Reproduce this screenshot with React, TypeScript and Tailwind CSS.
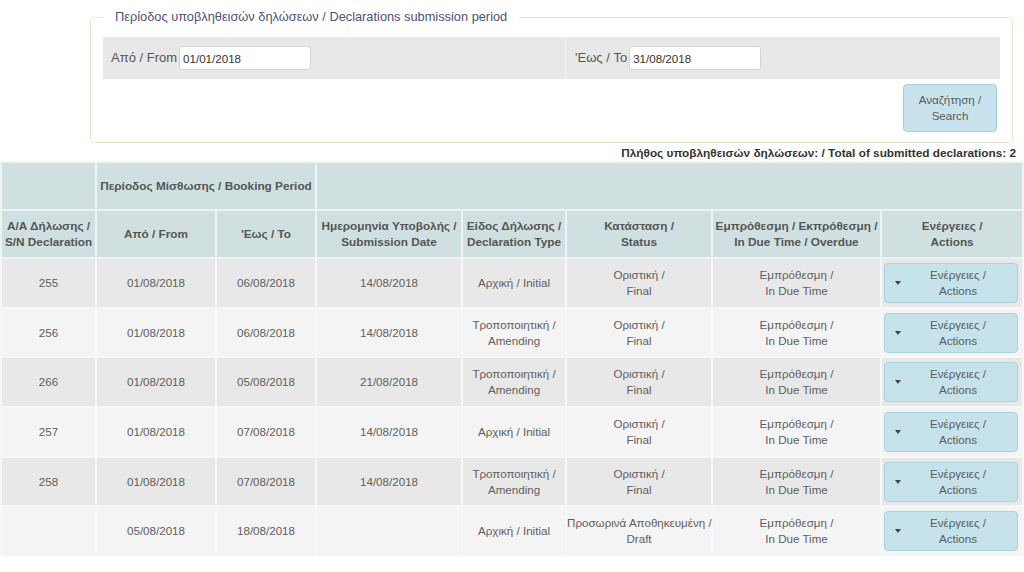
import React from 'react'

type Row = {
  sn: string
  from: string
  to: string
  submitted: string
  type: [string, string?]
  status: [string, string]
}

const ROWS: Row[] = [
  { sn: '255', from: '01/08/2018', to: '06/08/2018', submitted: '14/08/2018', type: ['Αρχική / Initial'], status: ['Οριστική /', 'Final'] },
  { sn: '256', from: '01/08/2018', to: '06/08/2018', submitted: '14/08/2018', type: ['Τροποποιητική /', 'Amending'], status: ['Οριστική /', 'Final'] },
  { sn: '266', from: '01/08/2018', to: '05/08/2018', submitted: '21/08/2018', type: ['Τροποποιητική /', 'Amending'], status: ['Οριστική /', 'Final'] },
  { sn: '257', from: '01/08/2018', to: '07/08/2018', submitted: '14/08/2018', type: ['Αρχική / Initial'], status: ['Οριστική /', 'Final'] },
  { sn: '258', from: '01/08/2018', to: '07/08/2018', submitted: '14/08/2018', type: ['Τροποποιητική /', 'Amending'], status: ['Οριστική /', 'Final'] },
  { sn: '', from: '05/08/2018', to: '18/08/2018', submitted: '', type: ['Αρχική / Initial'], status: ['Προσωρινά Αποθηκευμένη /', 'Draft'] },
]

const th = 'border-2 border-[#eef3f3] px-0 text-center align-middle font-bold text-[11.8px] leading-[16px] text-[#555] whitespace-nowrap'
const td = 'border-2 border-[#f7f7f7] px-0 text-center align-middle text-[11.6px] leading-[16px] text-[#5e5e5e] whitespace-nowrap'

function Lines({ lines }: { lines: (string | undefined)[] }) {
  return (
    <>
      {lines.filter(Boolean).map((l, i) => (
        <div key={i}>{l}</div>
      ))}
    </>
  )
}

function ActionsButton() {
  return (
    <button className="flex h-[40px] w-[134px] items-center rounded-[4px] border border-[#a8d2de] bg-[#c6e3eb] px-[10px] text-[11.6px] leading-[16px] text-[#5a5a5a]">
      <span className="h-0 w-0 border-x-[3.5px] border-t-[4px] border-x-transparent border-t-[#444]" />
      <span className="flex-1 pl-[8px] text-center">
        Ενέργειες /<br />Actions
      </span>
    </button>
  )
}

export default function App() {
  return (
    <div className="w-[1024px] h-[572px] overflow-hidden bg-white font-['Liberation_Sans',Arial,sans-serif]">
      <div className="pl-[90px] pr-[11px] pt-[7px]">
        <fieldset className="rounded-[5px] border border-[#e6e6c8] px-[12px] pb-[10px]">
          <legend className="ml-0 px-[12px] text-[12.8px] leading-[20px] text-[#4f4f7c]">
            Περίοδος υποβληθεισών δηλώσεων / Declarations submission period
          </legend>
          <div className="mt-[10px] flex h-[42px] bg-[#e8e8e8] text-[13px] text-[#555]">
            <div className="flex w-[463px] items-center border-r border-[#f3f3f3] pl-[8px]">
              <span>Από / From</span>
              <input
                readOnly
                value="01/01/2018"
                className="ml-[2px] h-[24px] w-[132px] rounded-[3px] border border-[#d4d4d4] bg-white px-[3px] text-[11.6px] text-[#333] outline-none"
              />
            </div>
            <div className="flex flex-1 items-center pl-[9px]">
              <span>'Εως / To</span>
              <input
                readOnly
                value="31/08/2018"
                className="ml-[2px] h-[24px] w-[132px] rounded-[3px] border border-[#d4d4d4] bg-white px-[3px] text-[11.6px] text-[#333] outline-none"
              />
            </div>
          </div>
          <div className="mt-[5px] flex justify-end pr-[3px]">
            <button className="h-[48px] w-[94px] rounded-[4px] border border-[#a3cddb] bg-[#c8e3ed] text-[11.6px] leading-[16px] text-[#5a5a5a]">
              Αναζήτηση /<br />Search
            </button>
          </div>
        </fieldset>
      </div>
      <div className="mt-[2px] pr-[8px] text-right text-[11.8px] font-bold leading-[16px] text-[#333]">
        Πλήθος υποβληθεισών δηλώσεων: / Total of submitted declarations: 2
      </div>
      <table className="w-[1022px] table-fixed border-collapse">
        <colgroup>
          <col className="w-[95px]" />
          <col className="w-[120px]" />
          <col className="w-[100px]" />
          <col className="w-[146px]" />
          <col className="w-[104px]" />
          <col className="w-[146px]" />
          <col className="w-[169px]" />
          <col className="w-[142px]" />
        </colgroup>
        <thead className="bg-[#d0e0e1]">
          <tr className="h-[48px]">
            <th className={th} />
            <th className={th} colSpan={2}>
              Περίοδος Μίσθωσης / Booking Period
            </th>
            <th className={th} colSpan={5} />
          </tr>
          <tr className="h-[48px]">
            <th className={th}><Lines lines={['Α/Α Δήλωσης /', 'S/N Declaration']} /></th>
            <th className={th}>Από / From</th>
            <th className={th}>'Εως / To</th>
            <th className={th}><Lines lines={['Ημερομηνία Υποβολής /', 'Submission Date']} /></th>
            <th className={th}><Lines lines={['Είδος Δήλωσης /', 'Declaration Type']} /></th>
            <th className={th}><Lines lines={['Κατάσταση /', 'Status']} /></th>
            <th className={th}><Lines lines={['Εμπρόθεσμη / Εκπρόθεσμη /', 'In Due Time / Overdue']} /></th>
            <th className={th}><Lines lines={['Ενέργειες /', 'Actions']} /></th>
          </tr>
        </thead>
        <tbody>
          {ROWS.map((r, i) => (
            <tr key={i} className={`h-[49.7px] ${i % 2 === 0 ? 'bg-[#e8e8e8]' : 'bg-[#f4f4f4]'}`}>
              <td className={td}>{r.sn}</td>
              <td className={td}>{r.from}</td>
              <td className={td}>{r.to}</td>
              <td className={td}>{r.submitted}</td>
              <td className={td}><Lines lines={r.type} /></td>
              <td className={td}><Lines lines={r.status} /></td>
              <td className={td}><Lines lines={['Εμπρόθεσμη /', 'In Due Time']} /></td>
              <td className={`${td} px-[2px]`}>
                <ActionsButton />
              </td>
            </tr>
          ))}
        </tbody>
      </table>
    </div>
  )
}
